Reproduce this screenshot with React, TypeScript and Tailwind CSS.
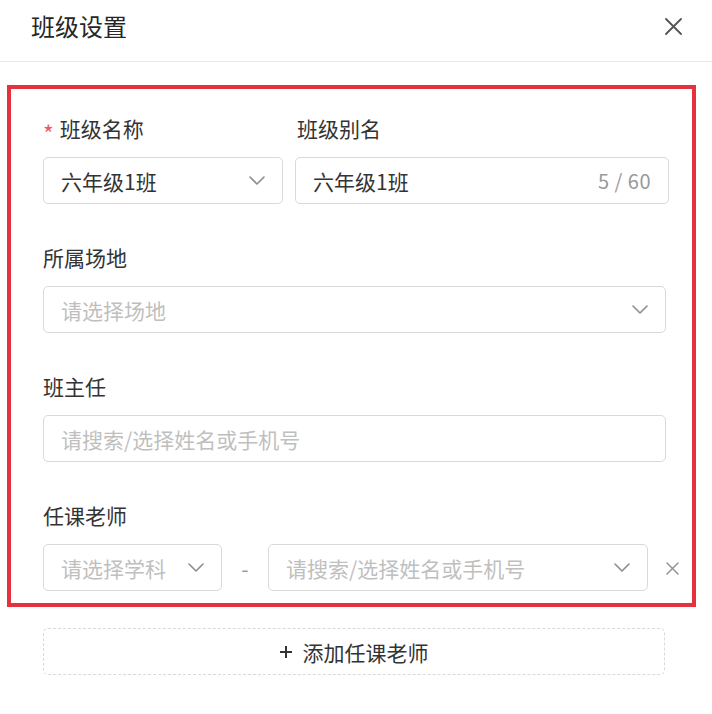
import React from "react";

const Chevron = () => (
  <svg width="16" height="9" viewBox="0 0 16 9" fill="none" className="shrink-0">
    <path d="M1 1l7 7 7-7" stroke="#8c8c8c" strokeWidth="1.6" strokeLinecap="round" strokeLinejoin="round" />
  </svg>
);

const Label = ({ children, required }: { children: React.ReactNode; required?: boolean }) => (
  <div className="flex h-[28px] items-center text-[21px] leading-[28px] text-[#333333]">
    {required && <span className="mr-[6px] mt-[10px] text-[23px] leading-none text-[#f5555d]">*</span>}
    {children}
  </div>
);

const SelectBox = ({ text, placeholder, className = "" }: { text?: string; placeholder?: string; className?: string }) => (
  <div className={`flex h-[47px] shrink-0 items-center justify-between rounded-[5px] border border-[#d9d9d9] bg-white pl-[17px] pr-[17px] ${className}`}>
    <span className={`whitespace-nowrap text-[21px] leading-[28px] ${text ? "text-[#333333]" : "text-[#bfbfbf]"}`}>{text ?? placeholder}</span>
    <Chevron />
  </div>
);

export default function App() {
  return (
    <div className="h-[714px] w-[712px] bg-white font-['Noto_Sans_CJK_SC','Noto_Sans',sans-serif]">
      <div className="flex h-[62px] items-start justify-between border-b border-[#e8e8e8] pl-[31px] pr-[30px] pt-[13px]">
        <div className="text-[24px] leading-[26px] text-[#262626]">班级设置</div>
        <svg width="17" height="17" viewBox="0 0 17 17" className="mt-[5px]">
          <path d="M1 1L16 16M16 1L1 16" stroke="#555555" strokeWidth="1.8" strokeLinecap="round" />
        </svg>
      </div>

      <div className="ml-[7px] mt-[23px] h-[522px] w-[689px] border-4 border-[#e5323d] pl-[32px] pr-[26px] pt-[25px]">
        <div className="mr-[-3px] flex gap-[12px]">
          <div className="w-[240px] shrink-0">
            <Label required>班级名称</Label>
            <div className="h-[15px]" />
            <SelectBox text="六年级1班" className="w-full" />
          </div>
          <div className="flex-1">
            <div className="pl-[2px]">
              <Label>班级别名</Label>
            </div>
            <div className="h-[15px]" />
            <div className="flex h-[47px] items-center justify-between rounded-[5px] border border-[#d9d9d9] bg-white pl-[17px] pr-[17px]">
              <span className="text-[21px] leading-[28px] text-[#333333]">六年级1班</span>
              <span className="text-[20px] leading-[28px] tracking-[0.5px] text-[#999999]">5 / 60</span>
            </div>
          </div>
        </div>

        <div className="mt-[39px]">
          <Label>所属场地</Label>
          <div className="h-[15px]" />
          <SelectBox placeholder="请选择场地" className="w-full" />
        </div>

        <div className="mt-[39px]">
          <Label>班主任</Label>
          <div className="h-[15px]" />
          <div className="flex h-[47px] items-center rounded-[5px] border border-[#d9d9d9] bg-white pl-[17px]">
            <span className="text-[21px] leading-[28px] text-[#bfbfbf]">请搜索/选择姓名或手机号</span>
          </div>
        </div>

        <div className="mt-[39px]">
          <Label>任课老师</Label>
          <div className="h-[15px]" />
          <div className="flex items-center">
            <SelectBox placeholder="请选择学科" className="w-[179px]" />
            <div className="flex w-[46px] shrink-0 justify-center text-[21px] leading-[28px] text-[#999999]">-</div>
            <SelectBox placeholder="请搜索/选择姓名或手机号" className="w-[380px]" />
            <svg width="13" height="13" viewBox="0 0 13 13" className="ml-[18px] mt-[2px] shrink-0">
              <path d="M1 1L12 12M12 1L1 12" stroke="#8c8c8c" strokeWidth="1.4" strokeLinecap="round" />
            </svg>
          </div>
        </div>
      </div>

      <div className="ml-[43px] mt-[21px] flex h-[47px] w-[622px] items-center justify-center gap-[11px] rounded-[5px] border border-dashed border-[#d9d9d9]">
        <svg width="12" height="12" viewBox="0 0 12 12">
          <path d="M6 0V12M0 6H12" stroke="#333333" strokeWidth="2" />
        </svg>
        <span className="text-[21px] leading-[28px] text-[#333333]">添加任课老师</span>
      </div>
    </div>
  );
}
